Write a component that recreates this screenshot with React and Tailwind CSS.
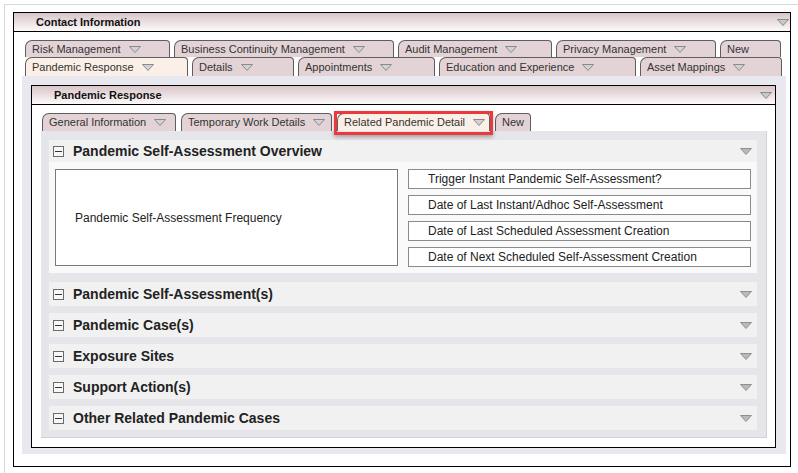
import React from "react";

const Caret = ({ fill = "#d2d2d6", stroke = "#8a8a8a" }) => (
  <svg width="12" height="7" viewBox="0 0 12 7" className="shrink-0">
    <path d="M0.5 0.5 H11.5 L6 6.5 Z" fill={fill} stroke={stroke} strokeWidth="1" />
  </svg>
);

const MinusBox = () => (
  <span className="w-[11px] h-[11px] border border-[#6b6b6b] bg-[#f7f7f7] flex items-center justify-center shrink-0">
    <span className="w-[7px] h-[1px] bg-[#333]" />
  </span>
);

const Tab = ({ label, w, h, active, arrow = true }) => (
  <div
    className={`${w} ${h} flex items-center gap-[8px] pl-[6px] border border-b-0 border-[#5e5e5e] rounded-tl-[7px] rounded-tr-[4px] text-[11px] leading-none text-[#333] whitespace-nowrap overflow-hidden ${
      active ? "bg-[#fbf0e7]" : "bg-[#e3d3d6]"
    }`}
  >
    <span>{label}</span>
    {arrow && <Caret />}
  </div>
);

const SectionBar = ({ title }) => (
  <div className="h-[24px] bg-[#f1f1f1] flex items-center pl-[4px] pr-[5px]">
    <MinusBox />
    <span className="ml-[9px] text-[14px] font-bold text-[#222]">{title}</span>
    <span className="ml-auto">
      <Caret fill="#b9b9bd" stroke="#909090" />
    </span>
  </div>
);

const FieldBox = ({ children }) => (
  <div className="h-[20px] border border-[#8a8a8a] bg-white flex items-center pl-[19px] text-[12px] text-[#222]">
    {children}
  </div>
);

export default function App() {
  const collapsed = [
    "Pandemic Self-Assessment(s)",
    "Pandemic Case(s)",
    "Exposure Sites",
    "Support Action(s)",
    "Other Related Pandemic Cases",
  ];

  return (
    <div className="w-[798px] h-[473px] bg-white pl-[4px] pt-[4px] font-['Liberation_Sans',Arial,sans-serif]">
      <div className="h-full border-l border-t border-[#d8d8d8] pl-[8px] pt-[7px]">
        {/* Contact Information frame */}
        <div className="w-[778px] h-[455px] border border-black flex flex-col bg-white">
          <div className="h-[19px] shrink-0 border-b border-black bg-linear-to-b from-[#d8c5c8] to-[#fdfafa] flex items-center pl-[22px] pr-[1px]">
            <span className="text-[11px] font-bold text-[#111]">Contact Information</span>
            <span className="ml-auto">
              <Caret fill="#c8c8cc" stroke="#8a8a8a" />
            </span>
          </div>

          <div className="flex-1 flex flex-col pl-[8px] pr-[4px] pt-[8px] pb-[12px]">
            {/* tab rows */}
            <div className="ml-[3px] flex gap-[4px]">
              <Tab label="Risk Management" w="w-[145px]" h="h-[17px]" />
              <Tab label="Business Continuity Management" w="w-[220px]" h="h-[17px]" />
              <Tab label="Audit Management" w="w-[154px]" h="h-[17px]" />
              <Tab label="Privacy Management" w="w-[160px]" h="h-[17px]" />
              <Tab label="New" w="w-[61px]" h="h-[17px]" arrow={false} />
            </div>
            <div className="ml-[3px] flex gap-[4px]">
              <Tab label="Pandemic Response" w="w-[163px]" h="h-[19px]" active />
              <Tab label="Details" w="w-[102px]" h="h-[19px]" />
              <Tab label="Appointments" w="w-[137px]" h="h-[19px]" />
              <Tab label="Education and Experience" w="w-[197px]" h="h-[19px]" />
              <Tab label="Asset Mappings" w="w-[142px]" h="h-[19px]" />
            </div>

            {/* Pandemic Response panel */}
            <div className="flex-1 bg-[#e8e8ee] pl-[9px] pt-[9px] pr-[10px] pb-[6px] flex flex-col">
              <div className="flex-1 border border-black bg-white flex flex-col">
                <div className="h-[19px] shrink-0 border-b border-black bg-linear-to-b from-[#d8c5c8] to-[#fdfafa] flex items-center pl-[22px] pr-[3px]">
                  <span className="text-[11px] font-bold text-[#111]">Pandemic Response</span>
                  <span className="ml-auto">
                    <Caret fill="#c8c8cc" stroke="#8a8a8a" />
                  </span>
                </div>

                <div className="flex-1 flex flex-col pl-[9px] pr-[8px] pt-[8px] pb-[9px]">
                  <div className="ml-[1px] flex gap-[5px]">
                    <Tab label="General Information" w="w-[134px]" h="h-[18px]" />
                    <Tab label="Temporary Work Details" w="w-[151px]" h="h-[18px]" />
                    <div className="relative">
                      <Tab label="Related Pandemic Detail" w="w-[153px]" h="h-[18px]" active />
                      {/* highlight box */}
                      <div className="absolute -left-[3px] -right-[3px] -top-[2px] -bottom-[4px] border-[3px] border-[#ea3a3f] shadow-[0_2px_4px_rgba(0,0,0,0.3)] pointer-events-none" />
                    </div>
                    <Tab label="New" w="w-[36px]" h="h-[18px]" arrow={false} />
                  </div>

                  {/* sections */}
                  <div className="flex-1 bg-[#e6e6ea] border-r border-b border-[#d2d2d6] pl-[8px] pr-[9px] pt-[9px] pb-[6px] flex flex-col">
                    <div className="h-[22px] bg-[#f1f1f1] flex items-center pl-[4px] pr-[5px]">
                      <MinusBox />
                      <span className="ml-[9px] text-[14px] font-bold text-[#222]">
                        Pandemic Self-Assessment Overview
                      </span>
                      <span className="ml-auto">
                        <Caret fill="#b9b9bd" stroke="#909090" />
                      </span>
                    </div>
                    <div className="h-[111px] bg-[#f9f9f9] flex gap-[10px] px-[6px] pt-[7px] pb-[7px]">
                      <div className="w-[343px] border border-[#7a7a7a] bg-white flex items-center pl-[19px] text-[12px] text-[#222]">
                        Pandemic Self-Assessment Frequency
                      </div>
                      <div className="flex-1 flex flex-col gap-[6px]">
                        <FieldBox>Trigger Instant Pandemic Self-Assessment?</FieldBox>
                        <FieldBox>Date of Last Instant/Adhoc Self-Assessment</FieldBox>
                        <FieldBox>Date of Last Scheduled Assessment Creation</FieldBox>
                        <FieldBox>Date of Next Scheduled Self-Assessment Creation</FieldBox>
                      </div>
                    </div>

                    <div className="mt-[9px] flex flex-col gap-[7px]">
                      {collapsed.map((title) => (
                        <SectionBar key={title} title={title} />
                      ))}
                    </div>
                  </div>
                </div>
              </div>
            </div>
          </div>
        </div>
      </div>
    </div>
  );
}
